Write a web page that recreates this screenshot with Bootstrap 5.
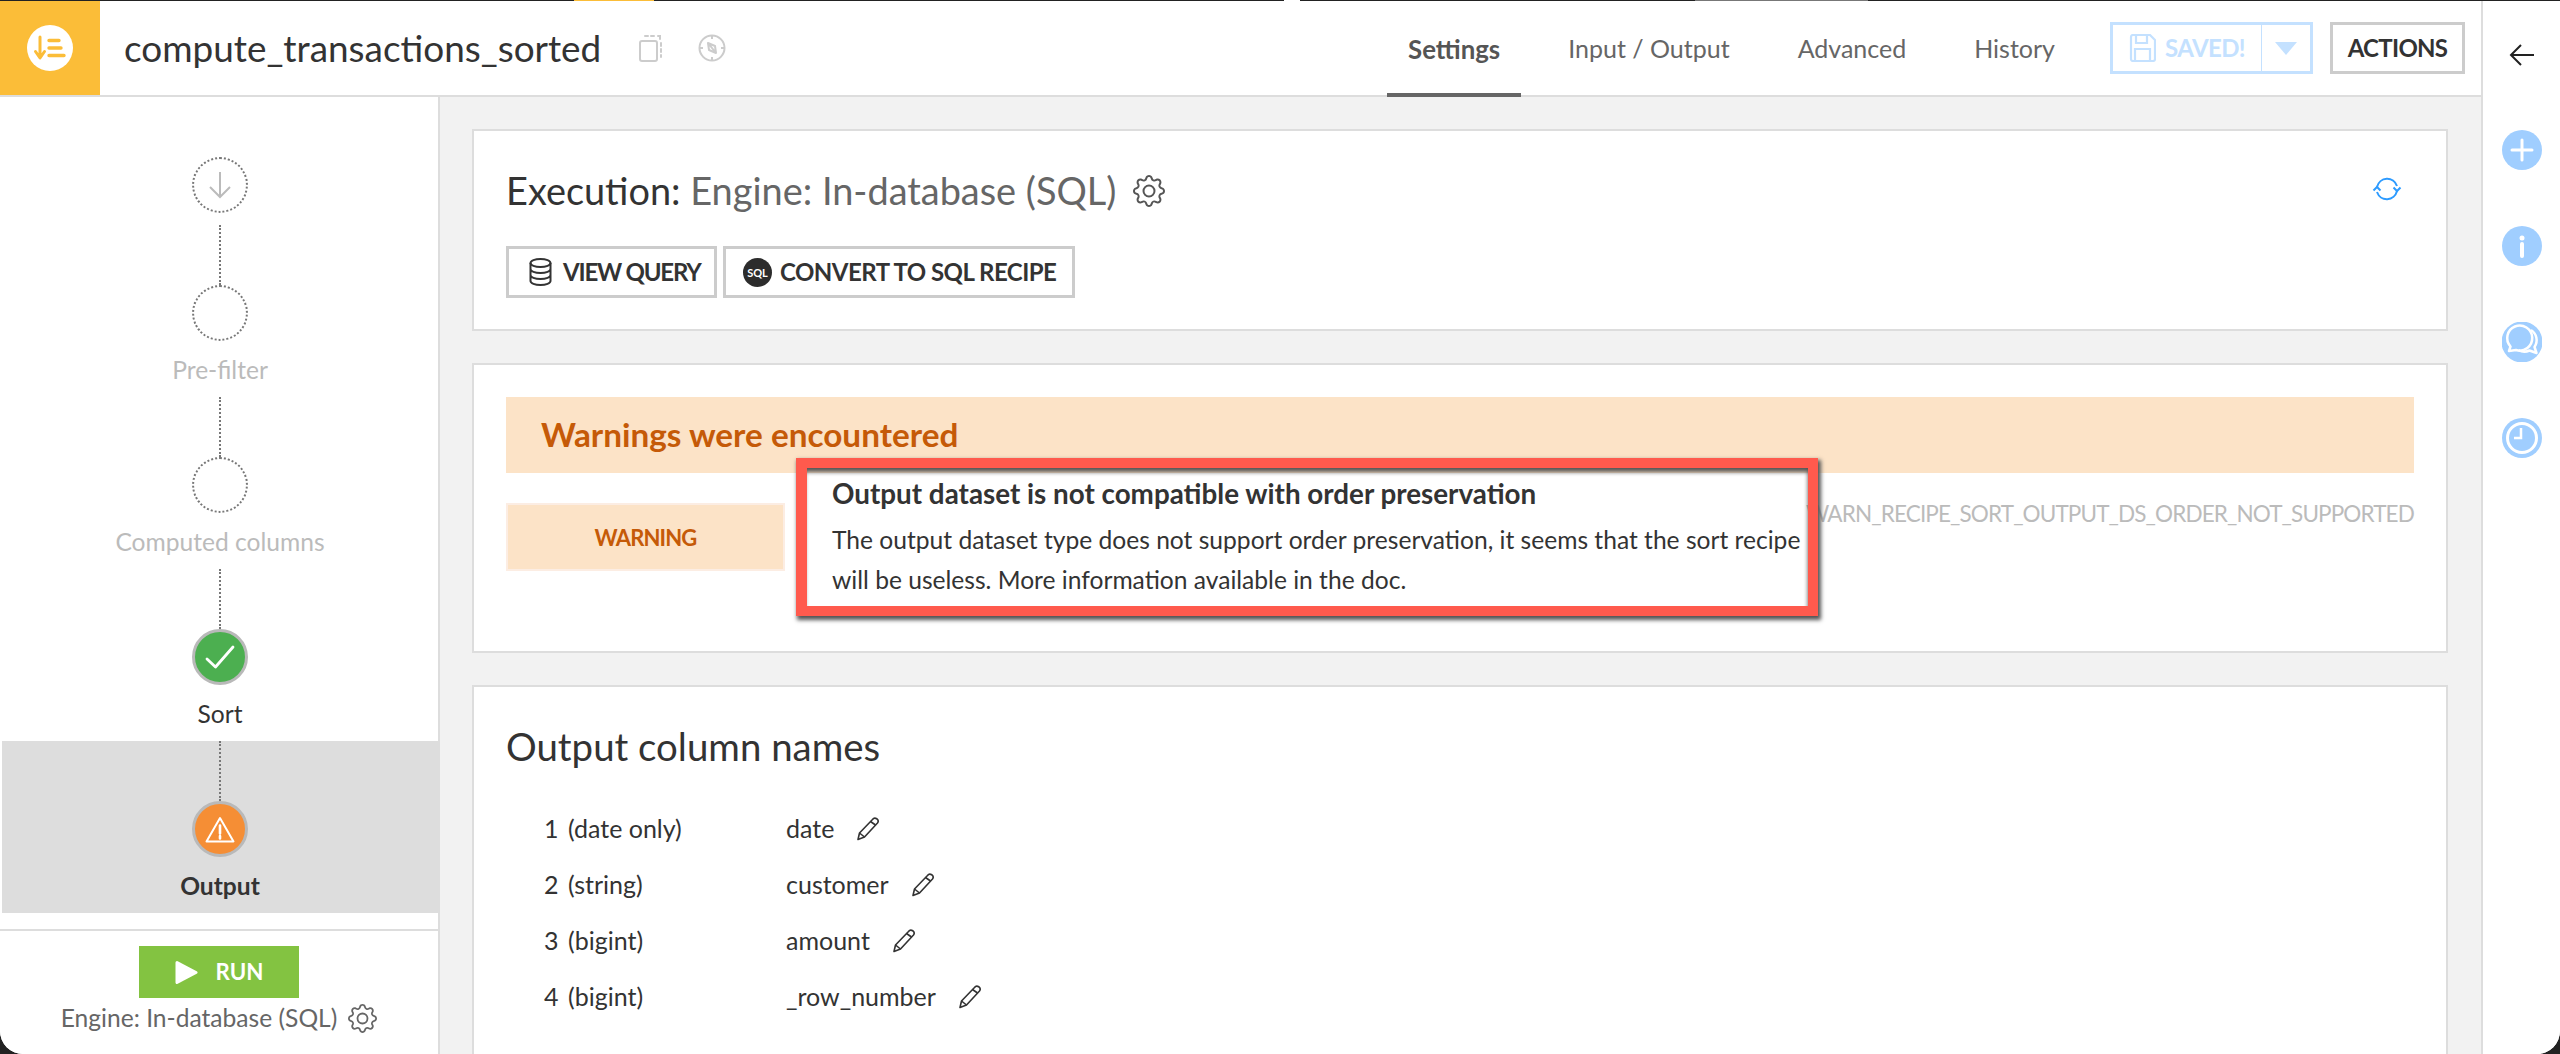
<!DOCTYPE html>
<html lang="en">
<head>
<meta charset="UTF-8">
<title>compute_transactions_sorted</title>
<link href="https://cdn.jsdelivr.net/npm/bootstrap@5.3.2/dist/css/bootstrap.min.css" rel="stylesheet">
<style>
  html, body { height: 100%; overflow: hidden; }
  body { background: #222; font-family: "Lato", "Liberation Sans", sans-serif; color: #333; font-size: 24.6px; }

  /* window edge */
  .edge { height: 1px; }
  .edge i { display: block; height: 1px; }
  .e1 { width: 574px; } .e2 { width: 80px; background: #fbbd38; } .e3 { width: 630px; }
  .e4 { width: 16px; background: #fff; } .e5 { width: 395px; } .e6 { width: 173px; background: #777; }

  .shell { height: 1053px; background: #fff; border-radius: 0 0 23px 23px; overflow: hidden; }
  .left-col { width: 2481px; }

  /* header */
  .top-head { height: 96px; flex-shrink: 0; border-bottom: 2px solid #ddd; background: #fff; }
  .logo-box { width: 100px; background: #fbbd38; }
  .recipe-name { font-size: 36.9px; margin-left: 24px; line-height: 50px; }
  .head-ico { width: 28px; height: 28px; color: #ccc; }
  .head-icons { gap: 33px; margin-left: 36px; }
  .tab-link { padding: 4px 21px 0; font-size: 25px; color: #666; text-decoration: none; margin-left: 26px; margin-bottom: -2px; border-bottom: 4px solid transparent; }
  .tab-link.is-on { font-weight: 700; font-size: 25.8px; color: #555; border-bottom-color: #666; }
  .tabs-wrap { margin-right: 34px; }
  .flat-btn { height: 52px; border: 3px solid #ccc; background: #fff; border-radius: 0; font-weight: 700; font-size: 24px; color: #333; padding: 0 15px; line-height: 1; }
  .flat-btn:hover { border-color: #ccc; background: #fff; }
  .save-main { width: 153px; border-color: #c4e1ff; border-right: 2px solid #c4e1ff; color: #c4e1ff; padding: 0 0 0 16px; gap: 9px; letter-spacing: -.6px; }
  .btn-group > .save-caret { width: 51px; border-color: #c4e1ff; border-left: 0; padding: 0; margin-left: 0; }
  .save-main:hover, .btn-group > .save-caret:hover { border-color: #c4e1ff; color: #c4e1ff; }
  .act-btn { width: 135px; margin: 0 16px 0 17px; padding: 0; letter-spacing: -.7px; }
  .query-btn { gap: 11px; width: 211px; padding: 0 0 0 20px; letter-spacing: -1.2px; }
  .convert-btn { gap: 8px; width: 352px; padding: 0 0 0 17px; letter-spacing: -.52px; }

  /* sidebar */
  .side-col { width: 440px; border-right: 2px solid #ddd; background: #fff; padding-left: 2px; }
  .step-first { padding-top: 60px; margin-bottom: 12px; }
  .step-item { height: 172px; flex-shrink: 0; }
  .step-item.is-on { background: #ddd; }
  .dot-line { width: 0; height: 60px; border-left: 2px dotted #777; }
  .step-ring { width: 56px; height: 56px; border-radius: 50%; border: 2px dotted #777; background: transparent; }
  .ring-ok { border: 3px solid #b9b9b9; background: #4caf50; }
  .ring-warn { border: 3px solid #b9b9b9; background: #f58e35; }
  .step-label { line-height: 30px; margin-top: 14px; }
  .dim-label { color: #bbb; }
  .side-foot { margin-top: 16px; margin-left: -2px; border-top: 2px solid #ddd; padding-top: 15px; }
  .run-btn { width: 160px; height: 52px; background: #83c341; color: #fff; border: 0; border-radius: 0; font-weight: 700; font-size: 22.3px; gap: 18px; padding: 0; }
  .run-btn:hover { background: #83c341; color: #fff; }
  .engine-line { color: #666; line-height: 30px; margin-top: 5px; gap: 11px; }

  /* content */
  .main-col { background: #f2f2f2; padding: 32px 33px 0 32px; gap: 32px; min-width: 0; overflow: hidden; }
  .main-col .card { border: 2px solid #ddd; border-radius: 0; flex-shrink: 0; }
  .exec-body { padding: 35px 32px 31px 32px; }
  .box-title { font-size: 37.9px; line-height: 50px; }
  .box-title span { color: #666; }
  .exec-gear { width: 32px; height: 32px; margin-left: 17px; fill: #555; }
  .sync-ico { margin-right: 12px; margin-bottom: 4px; }
  .output-title { font-size: 38.4px; line-height: 50px; }
  .exec-btns { margin-top: 30px; gap: 6px; }
  .sql-disc { width: 29px; height: 29px; border-radius: 50%; background: #2c2c2c; color: #fff; font-size: 11px; font-weight: 700; letter-spacing: 0; }
  .warn-body { padding: 32px 32px 51px 32px; }
  .warn-banner { height: 76px; background: #fce3c7; color: #c55a08; font-weight: 700; font-size: 33.3px; padding-left: 35px; }
  .warn-row { margin-top: 3px; }
  .warn-tag { width: 279px; height: 68px; margin-top: 27px; background: #fce3c7; border: 2px solid #fcede3; color: #c55a08; font-weight: 700; font-size: 22px; letter-spacing: -.85px; flex-shrink: 0; }
  .warn-msg { position: relative; margin-left: 47px; flex-shrink: 0; white-space: nowrap; }
  .warn-msg h6 { font-size: 27.8px; font-weight: 700; line-height: 36px; margin: 0 0 8px; color: #333; }
  .warn-msg p { margin: 0; line-height: 40px; color: #333; }
  .red-mark { position: absolute; left: -36px; top: -18px; width: 1022px; height: 158px; z-index: 1; pointer-events: none;
    border: 10px solid #ff5a4d; border-left-width: 11px;
    box-shadow: 2px 3px 4px 1px #555, inset -1px 5px 4px -1px #555; }
  .warn-code { font-size: 22.5px; letter-spacing: -.87px; line-height: 40px; margin-top: 18px; color: #bbb; flex-shrink: 0; }
  .out-body { padding: 34px 32px 60px 32px; height: 500px; }
  .col-rows { margin-top: 30px; }
  .col-row { height: 56px; padding-left: 38px; font-size: 25px; }
  .col-num { width: 24px; }
  .col-type { width: 218px; }
  .col-edit { width: 24px; height: 24px; margin-left: 22px; }

  /* right rail */
  .rail { width: 79px; border-left: 2px solid #ddd; background: #fff; padding-top: 43px; }
  .rail-back { width: 26px; height: 22px; margin-bottom: 64px; }
  .rail-ico { width: 40px; height: 40px; margin-bottom: 56px; flex-shrink: 0; }
</style>
</head>
<body>
  <svg width="0" height="0" class="position-absolute">
    <symbol id="ico-gear" viewBox="0 0 16 16"><path d="M8 4.754a3.246 3.246 0 1 0 0 6.492 3.246 3.246 0 0 0 0-6.492zM5.754 8a2.246 2.246 0 1 1 4.492 0 2.246 2.246 0 0 1-4.492 0z"/><path d="M9.796 1.343c-.527-1.79-3.065-1.79-3.592 0l-.094.319a.873.873 0 0 1-1.255.52l-.292-.16c-1.64-.892-3.433.902-2.54 2.541l.159.292a.873.873 0 0 1-.52 1.255l-.319.094c-1.79.527-1.79 3.065 0 3.592l.319.094a.873.873 0 0 1 .52 1.255l-.16.292c-.892 1.64.901 3.434 2.541 2.54l.292-.159a.873.873 0 0 1 1.255.52l.094.319c.527 1.79 3.065 1.79 3.592 0l.094-.319a.873.873 0 0 1 1.255-.52l.292.16c1.64.893 3.434-.902 2.54-2.541l-.159-.292a.873.873 0 0 1 .52-1.255l.319-.094c1.79-.527 1.79-3.065 0-3.592l-.319-.094a.873.873 0 0 1-.52-1.255l.16-.292c.893-1.64-.902-3.433-2.541-2.54l-.292.159a.873.873 0 0 1-1.255-.52l-.094-.319zm-2.633.283c.246-.835 1.428-.835 1.674 0l.094.319a1.873 1.873 0 0 0 2.693 1.115l.291-.16c.764-.415 1.6.42 1.184 1.185l-.159.292a1.873 1.873 0 0 0 1.116 2.692l.318.094c.835.246.835 1.428 0 1.674l-.319.094a1.873 1.873 0 0 0-1.115 2.693l.16.291c.415.764-.42 1.6-1.185 1.184l-.291-.159a1.873 1.873 0 0 0-2.693 1.116l-.094.318c-.246.835-1.428.835-1.674 0l-.094-.319a1.873 1.873 0 0 0-2.692-1.115l-.292.16c-.764.415-1.6-.42-1.184-1.185l.159-.291A1.873 1.873 0 0 0 1.945 8.93l-.319-.094c-.835-.246-.835-1.428 0-1.674l.319-.094A1.873 1.873 0 0 0 3.06 4.377l-.16-.292c-.415-.764.42-1.6 1.185-1.184l.292.159a1.873 1.873 0 0 0 2.692-1.115l.094-.319z"/></symbol>
    <symbol id="ico-pencil" viewBox="0 0 24 24"><g fill="none" stroke="#333" stroke-width="1.600" stroke-linejoin="round"><path d="M2 22.500l1.500-6.500L16.500 2.500a3 3 0 0 1 5 3.500L8.500 20z"/><path d="M14.500 4.500l5 3.500M3.500 16l5 4"/></g></symbol>
  </svg>

  <div class="edge d-flex">
    <i class="e1"></i><i class="e2"></i><i class="e3"></i><i class="e4"></i><i class="e5"></i><i class="e6"></i>
  </div>

  <div class="shell d-flex">
    <div class="left-col d-flex flex-column">

      <!-- header -->
      <header class="top-head d-flex align-items-stretch">
        <div class="logo-box d-flex align-items-center justify-content-center">
          <svg width="46" height="46" viewBox="0 0 46 46">
            <circle cx="23" cy="23" r="23" fill="#fff"/>
            <path d="M13 12v20M8.500 26.500 13 33l4.500-6.500" fill="none" stroke="#fbbd38" stroke-width="3" stroke-linecap="round" stroke-linejoin="round"/>
            <path d="M22 15.500h10M22 23h12M22 30.500h15" fill="none" stroke="#fbbd38" stroke-width="3.400" stroke-linecap="round"/>
          </svg>
        </div>
        <div class="recipe-name align-self-center">compute_transactions_sorted</div>
        <div class="head-icons d-flex align-items-center">
          <svg class="head-ico" viewBox="0 0 28 28" fill="none" stroke="currentColor" stroke-width="2">
            <rect x="3" y="7" width="17" height="20" rx="2"/>
            <path d="M8 2h3M14 2h3M21 2h2v3M24 9v3M24 15v3M24 21v2" stroke-linecap="round"/>
          </svg>
          <svg class="head-ico" viewBox="0 0 28 28" fill="none" stroke="currentColor" stroke-width="2">
            <circle cx="14" cy="14" r="12.500"/>
            <path d="M10 9l8 10M10 9l7 3 1 7-7-3z" stroke-linejoin="round"/>
            <path d="M14 2v3M26 14h-3M14 26v-3M2 14h3"/>
          </svg>
        </div>

        <nav class="tabs-wrap ms-auto d-flex align-items-stretch">
          <a class="tab-link is-on d-flex align-items-center" href="#">Settings</a>
          <a class="tab-link d-flex align-items-center" href="#">Input / Output</a>
          <a class="tab-link d-flex align-items-center" href="#">Advanced</a>
          <a class="tab-link d-flex align-items-center" href="#">History</a>
        </nav>

        <div class="btn-group align-self-center" role="group">
          <button type="button" class="btn flat-btn save-main d-flex align-items-center">
            <svg width="27" height="28" viewBox="0 0 27 28" fill="none" stroke="currentColor" stroke-width="2.200">
              <path d="M2 3a2 2 0 0 1 2-2h17l5 5v19a2 2 0 0 1-2 2H4a2 2 0 0 1-2-2z" stroke-linejoin="round"/>
              <path d="M7 1v8h11V1M6 27V15h15v12"/>
            </svg>
            SAVED!
          </button>
          <button type="button" class="btn flat-btn save-caret d-flex align-items-center justify-content-center">
            <svg width="22" height="13" viewBox="0 0 22 13"><path d="M0 0h22L11 13z" fill="#c4e1ff"/></svg>
          </button>
        </div>
        <button type="button" class="btn flat-btn act-btn align-self-center">ACTIONS</button>
      </header>

      <div class="d-flex flex-grow-1" style="min-height:0">

        <!-- steps -->
        <aside class="side-col d-flex flex-column flex-shrink-0">
          <div class="step-first d-flex justify-content-center">
            <div class="step-ring d-flex align-items-center justify-content-center">
              <svg width="24" height="28" viewBox="0 0 24 28" fill="none" stroke="#bbb" stroke-width="2"><path d="M12 1v25M2 16l10 10 10-10"/></svg>
            </div>
          </div>
          <div class="step-item d-flex flex-column align-items-center">
            <div class="dot-line"></div>
            <div class="step-ring"></div>
            <div class="step-label dim-label">Pre-filter</div>
          </div>
          <div class="step-item d-flex flex-column align-items-center">
            <div class="dot-line"></div>
            <div class="step-ring"></div>
            <div class="step-label dim-label">Computed columns</div>
          </div>
          <div class="step-item d-flex flex-column align-items-center">
            <div class="dot-line"></div>
            <div class="step-ring ring-ok d-flex align-items-center justify-content-center">
              <svg width="30" height="24" viewBox="0 0 30 24" fill="none" stroke="#fff" stroke-width="2.800" stroke-linecap="round" stroke-linejoin="round"><path d="M2 14l8.500 8L28 2"/></svg>
            </div>
            <div class="step-label">Sort</div>
          </div>
          <div class="step-item is-on d-flex flex-column align-items-center">
            <div class="dot-line"></div>
            <div class="step-ring ring-warn d-flex align-items-center justify-content-center">
              <svg width="30" height="27" viewBox="0 0 30 27" fill="none" stroke="#fff" stroke-width="2" stroke-linejoin="round"><path d="M15 2 28.500 25.500h-27z"/><path d="M15 9.500v8M15 20v2.500" stroke-width="2.600" stroke-linecap="round"/></svg>
            </div>
            <div class="step-label fw-bold">Output</div>
          </div>

          <div class="side-foot d-flex flex-column align-items-center">
            <button type="button" class="btn run-btn d-flex align-items-center justify-content-center">
              <svg width="23" height="25" viewBox="0 0 23 25"><path d="M2 2.500 21 12.500 2 22.500z" fill="#fff" stroke="#fff" stroke-width="3" stroke-linejoin="round"/></svg>
              RUN
            </button>
            <div class="engine-line d-flex align-items-center">
              Engine: In-database (SQL)
              <svg width="29" height="29" fill="#666"><use href="#ico-gear"/></svg>
            </div>
          </div>
        </aside>

        <!-- main -->
        <main class="main-col d-flex flex-column flex-grow-1">
          <section class="card">
            <div class="card-body exec-body">
              <div class="d-flex align-items-center">
                <div class="box-title">Execution: <span>Engine: In-database (SQL)</span></div>
                <svg class="exec-gear"><use href="#ico-gear"/></svg>
                <svg class="sync-ico ms-auto" width="30" height="24" viewBox="0 0 30 24" fill="none" stroke="#2d9bff" stroke-width="2">
                  <path d="M5 10A10.500 11 0 0 1 25 9"/><path d="M21.500 10.500l3.500 3.500 3.500-3.500"/>
                  <path d="M25 14A10.500 11 0 0 1 5 15"/><path d="M1.500 13.500 5 10l3.500 3.500"/>
                </svg>
              </div>
              <div class="exec-btns d-flex">
                <button type="button" class="btn flat-btn query-btn d-flex align-items-center">
                  <svg width="23" height="28" viewBox="0 0 23 28" fill="none" stroke="#333" stroke-width="2"><ellipse cx="11.500" cy="5" rx="10" ry="4"/><path d="M1.500 5v18c0 2.200 4.500 4 10 4s10-1.800 10-4V5M1.500 11c0 2.200 4.500 4 10 4s10-1.800 10-4M1.500 17c0 2.200 4.500 4 10 4s10-1.800 10-4"/></svg>
                  VIEW QUERY
                </button>
                <button type="button" class="btn flat-btn convert-btn d-flex align-items-center">
                  <span class="sql-disc d-flex align-items-center justify-content-center">SQL</span>
                  CONVERT TO SQL RECIPE
                </button>
              </div>
            </div>
          </section>

          <section class="card">
            <div class="card-body warn-body">
              <div class="warn-banner d-flex align-items-center">Warnings were encountered</div>
              <div class="warn-row d-flex">
                <div class="warn-tag d-flex align-items-center justify-content-center">WARNING</div>
                <div class="warn-msg">
                  <h6>Output dataset is not compatible with order preservation</h6>
                  <p>The output dataset type does not support order preservation, it seems that the sort recipe<br>will be useless. More information available in the doc.</p>
                  <div class="red-mark"></div>
                </div>
                <div class="warn-code ms-auto">WARN_RECIPE_SORT_OUTPUT_DS_ORDER_NOT_SUPPORTED</div>
              </div>
            </div>
          </section>

          <section class="card">
            <div class="card-body out-body">
              <div class="output-title">Output column names</div>
              <div class="col-rows">
                <div class="col-row d-flex align-items-center"><span class="col-num">1</span><span class="col-type">(date only)</span><span>date</span><svg class="col-edit"><use href="#ico-pencil"/></svg></div>
                <div class="col-row d-flex align-items-center"><span class="col-num">2</span><span class="col-type">(string)</span><span>customer</span><svg class="col-edit"><use href="#ico-pencil"/></svg></div>
                <div class="col-row d-flex align-items-center"><span class="col-num">3</span><span class="col-type">(bigint)</span><span>amount</span><svg class="col-edit"><use href="#ico-pencil"/></svg></div>
                <div class="col-row d-flex align-items-center"><span class="col-num">4</span><span class="col-type">(bigint)</span><span>_row_number</span><svg class="col-edit"><use href="#ico-pencil"/></svg></div>
              </div>
            </div>
          </section>
        </main>
      </div>
    </div>

    <!-- right rail -->
    <aside class="rail d-flex flex-column align-items-center">
      <svg class="rail-back" viewBox="0 0 26 22" fill="none" stroke="#222" stroke-width="2"><path d="M25 11H2M12 1 2 11l10 10"/></svg>
      <svg class="rail-ico" viewBox="0 0 40 40"><circle cx="20" cy="20" r="20" fill="#a0ceff"/><path d="M20 10v20M10 20h20" stroke="#fff" stroke-width="3" stroke-linecap="round"/></svg>
      <svg class="rail-ico" viewBox="0 0 40 40"><circle cx="20" cy="20" r="20" fill="#a0ceff"/><circle cx="20" cy="12" r="2.500" fill="#fff"/><path d="M20 18v12" stroke="#fff" stroke-width="4" stroke-linecap="round"/></svg>
      <svg class="rail-ico" viewBox="0 0 40 40"><circle cx="20" cy="20" r="20.500" fill="#a0ceff"/><path d="M7 29l1.500-4.500A12.500 12.500 0 1 1 14 28z" fill="none" stroke="#fff" stroke-width="2.500" stroke-linejoin="round"/><path d="M29 8a12 12 0 0 1 3.500 17l2 6-7-2.500a12 12 0 0 1-11-.5" fill="none" stroke="#fff" stroke-width="2.500" stroke-linejoin="round"/></svg>
      <svg class="rail-ico" viewBox="0 0 40 40"><circle cx="20" cy="20" r="20" fill="#a0ceff"/><circle cx="20" cy="20" r="14.500" fill="none" stroke="#fff" stroke-width="3"/><path d="M19 10v10h-7" fill="none" stroke="#fff" stroke-width="2.500"/></svg>
    </aside>
  </div>

  <script src="https://cdn.jsdelivr.net/npm/bootstrap@5.3.2/dist/js/bootstrap.bundle.min.js"></script>
</body>
</html>
